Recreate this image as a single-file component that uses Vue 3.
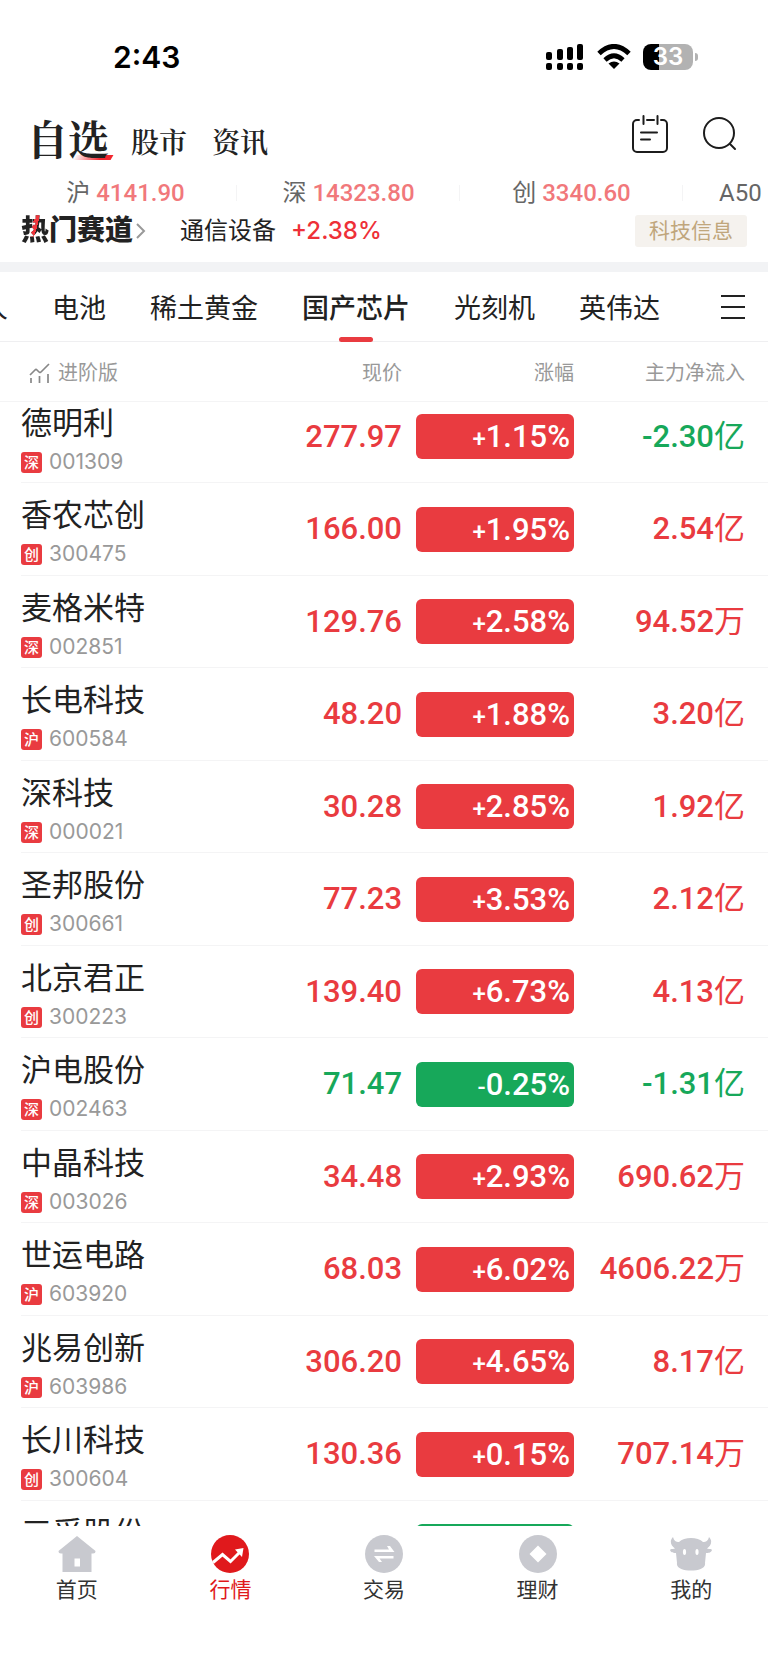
<template>
  <div class="app">
    <div class="status">
      <span class="time">2:43</span>
      <div class="status-icons">
        <svg width="38" height="28" viewBox="0 0 38 28" aria-hidden="true">
          <rect x="0" y="9" width="6" height="8" rx="2" />
          <rect x="11" y="6" width="6" height="11" rx="2" />
          <rect x="21" y="4" width="6" height="13" rx="2" />
          <rect x="31" y="1" width="6" height="16" rx="2" />
          <rect v-for="x in [0, 11, 21, 31]" :key="x" :x="x" y="20" width="6" height="7" rx="2" />
        </svg>
        <svg width="34" height="26" viewBox="0 0 34 26" aria-hidden="true">
          <path d="M2 9.500Q17-4.500 32 9.500" fill="none" stroke="#000" stroke-width="5" />
          <path d="M8 16Q17 7.500 26 16" fill="none" stroke="#000" stroke-width="4.600" />
          <path d="M11.500 19.500Q17 15.500 22.500 19.500L17 25Z" />
        </svg>
        <div class="battery"><span class="battery-level">33</span></div>
      </div>
    </div>

    <header class="topbar">
      <nav class="main-nav" aria-label="主导航">
        <a href="#" class="main-link active">自选</a>
        <a href="#" class="main-link">股市</a>
        <a href="#" class="main-link">资讯</a>
      </nav>
      <div class="tools">
        <button class="icon-btn" aria-label="日历">
          <svg width="37" height="38" viewBox="0 0 37 38" fill="none" stroke="#1c1c1c" stroke-width="2" stroke-linecap="round">
            <path d="M7 5H5a4 4 0 0 0-4 4v24a4 4 0 0 0 4 4h26a4 4 0 0 0 4-4V9a4 4 0 0 0-4-4h-2M15 5h7M11.500 1v8M25.500 1v8M9 17.500h16M9 24.500h9" />
          </svg>
        </button>
        <button class="icon-btn" aria-label="搜索">
          <svg width="34" height="34" viewBox="0 0 34 34" fill="none" stroke="#1c1c1c" stroke-width="2" stroke-linecap="round">
            <circle cx="16" cy="16" r="15" />
            <path d="M27 27l5 5" />
          </svg>
        </button>
      </div>
    </header>

    <ul class="ticker">
      <li v-for="t in indices" :key="t.name">
        {{ t.name }} <b v-if="t.value">{{ t.value }}</b>
      </li>
    </ul>

    <section class="hot">
      <a href="#" class="hot-title">
        <span class="hot-first">热</span>门赛道
        <svg width="10" height="18" viewBox="0 0 10 18" fill="none" stroke="#999" stroke-width="2" aria-hidden="true"><path d="M1 2l7 7-7 7" /></svg>
      </a>
      <span class="hot-name">通信设备</span>
      <span class="hot-change">+2.38%</span>
      <a href="#" class="hot-tag">科技信息</a>
    </section>

    <div class="tabs-bar">
      <div class="tabs" role="tablist">
        <button v-for="tab in tabs" :key="tab" class="tab" role="tab" :class="{ active: tab === current }" :aria-selected="tab === current" @click="current = tab">{{ tab }}</button>
      </div>
      <button class="more" aria-label="更多">
        <svg width="24" height="26" viewBox="0 0 24 26" stroke="#222" stroke-width="2" aria-hidden="true"><path d="M0 2h24M0 13h24M0 24h24" /></svg>
      </button>
    </div>

    <main class="list">
      <table>
        <colgroup>
          <col />
          <col class="col-price" />
          <col class="col-change" />
          <col class="col-flow" />
        </colgroup>
        <thead>
          <tr>
            <th scope="col">
              <svg width="21" height="20" viewBox="0 0 21 20" fill="none" stroke="#888" stroke-width="1.700" aria-hidden="true">
                <path d="M1 12l5-5q1-1 2 0l2 2q1 1 2 0l8-8M2 15v5M10.500 13v7M19 11v9" />
              </svg>
              进阶版
            </th>
            <th scope="col">现价</th>
            <th scope="col">涨幅</th>
            <th scope="col">主力净流入</th>
          </tr>
        </thead>
        <tbody>
          <tr v-for="s in stocks" :key="s.code" :class="{ fall: s.change[0] === '-' }">
            <td class="stock">
              <div class="name">{{ s.name }}</div>
              <div class="code"><span class="market">{{ s.market }}</span>{{ s.code }}</div>
            </td>
            <td class="price">{{ s.price }}</td>
            <td class="change"><span class="pill"><i>{{ s.change[0] }}</i>{{ s.change.slice(1) }}</span></td>
            <td class="flow" :class="{ out: s.flow[0] === '-' }">{{ s.flow }}<span class="unit">{{ s.unit }}</span></td>
          </tr>
        </tbody>
      </table>
    </main>

    <nav class="bottom-nav" aria-label="底部导航">
      <a href="#" class="bottom-link">
        <svg width="38" height="38" viewBox="0 0 38 38" aria-hidden="true">
          <path d="M19 1L37.500 16q0 2.500-2.500 2.500h-1.500V37h-29V18.500H3q-2.500 0-2.500-2.500Z" />
          <rect x="16.500" y="23.500" width="5.500" height="8" fill="#fff" />
        </svg>
        首页
      </a>
      <a href="#" class="bottom-link active">
        <svg width="38" height="38" viewBox="0 0 38 38" aria-hidden="true">
          <circle cx="19" cy="19" r="19" />
          <path d="M2 27.500L11.500 19.500L19.500 26.500L29 17" fill="none" stroke="#fff" stroke-width="3" />
          <path d="M24 14.500L32.500 13L31 22Z" fill="#fff" />
        </svg>
        行情
      </a>
      <a href="#" class="bottom-link">
        <svg width="38" height="38" viewBox="0 0 38 38" aria-hidden="true">
          <circle cx="19" cy="19" r="19" />
          <path d="M9.500 17V14.500H24L22 11h3L29.500 17ZM28.500 21V23.500H14.500L17 27h-3L9 21Z" fill="#fff" />
        </svg>
        交易
      </a>
      <a href="#" class="bottom-link">
        <svg width="38" height="38" viewBox="0 0 38 38" aria-hidden="true">
          <circle cx="19" cy="19" r="19" />
          <path d="M19 10.500L27.500 19L19 27.500L10.500 19Z" fill="#fff" />
        </svg>
        理财
      </a>
      <a href="#" class="bottom-link">
        <svg width="42" height="38" viewBox="0 0 42 38" aria-hidden="true">
          <path d="M3 2C4 6 6 7 9 7C14 1.500 28 1.500 33 7C36 7 38 6 39 2C43 6 41 11 37 13.500C39 14.500 41 13 42 15C41 18 38 18 36 18L35 28C37 38 5 38 7 28L6 18C4 18 1 18 0 15C1 13 3 14.500 5 13.500C1 11-1 6 3 2Z" />
          <ellipse cx="14.500" cy="17" rx="1.600" ry="3" fill="#fff" />
          <ellipse cx="27" cy="17" rx="1.600" ry="3" fill="#fff" />
        </svg>
        我的
      </a>
    </nav>
  </div>
</template>

<script setup>
import { ref } from 'vue'

const current = ref('国产芯片')
const tabs = ['机器人', '电池', '稀土黄金', '国产芯片', '光刻机', '英伟达']

const indices = [
  { name: '沪', value: '4141.90' },
  { name: '深', value: '14323.80' },
  { name: '创', value: '3340.60' },
  { name: 'A50' }
]

const stocks = [
  { name: '德明利', market: '深', code: '001309', price: '277.97', change: '+1.15%', flow: '-2.30', unit: '亿' },
  { name: '香农芯创', market: '创', code: '300475', price: '166.00', change: '+1.95%', flow: '2.54', unit: '亿' },
  { name: '麦格米特', market: '深', code: '002851', price: '129.76', change: '+2.58%', flow: '94.52', unit: '万' },
  { name: '长电科技', market: '沪', code: '600584', price: '48.20', change: '+1.88%', flow: '3.20', unit: '亿' },
  { name: '深科技', market: '深', code: '000021', price: '30.28', change: '+2.85%', flow: '1.92', unit: '亿' },
  { name: '圣邦股份', market: '创', code: '300661', price: '77.23', change: '+3.53%', flow: '2.12', unit: '亿' },
  { name: '北京君正', market: '创', code: '300223', price: '139.40', change: '+6.73%', flow: '4.13', unit: '亿' },
  { name: '沪电股份', market: '深', code: '002463', price: '71.47', change: '-0.25%', flow: '-1.31', unit: '亿' },
  { name: '中晶科技', market: '深', code: '003026', price: '34.48', change: '+2.93%', flow: '690.62', unit: '万' },
  { name: '世运电路', market: '沪', code: '603920', price: '68.03', change: '+6.02%', flow: '4606.22', unit: '万' },
  { name: '兆易创新', market: '沪', code: '603986', price: '306.20', change: '+4.65%', flow: '8.17', unit: '亿' },
  { name: '长川科技', market: '创', code: '300604', price: '130.36', change: '+0.15%', flow: '707.14', unit: '万' },
  { name: '三孚股份', market: '沪', code: '603938', price: '', change: '-', flow: '', unit: '' }
]
</script>

<style>
body { background: #fff; }
</style>

<style scoped>
* { box-sizing: border-box; }
.app { --red: #e93b40; --green: #17a85a; --line: #f4f4f5; height: 100vh; display: flex; flex-direction: column; overflow: hidden; background: #fff; color: #222; font-family: Roboto, 'Noto Sans CJK SC', sans-serif; }
.app > * { flex-shrink: 0; }
a { color: inherit; text-decoration: none; }
button { background: none; border: none; padding: 0; font: inherit; color: inherit; cursor: pointer; }
svg { display: block; flex-shrink: 0; }

.status { height: 114px; padding: 0 70px 0 113px; display: flex; align-items: center; justify-content: space-between; }
.time { font: 600 30px/38px Inter, sans-serif; color: #000; }
.status-icons { display: flex; align-items: center; gap: 13px; }
.battery { display: flex; align-items: center; }
.battery-level { width: 50px; height: 26px; margin-left: -1px; border-radius: 8px; background: linear-gradient(90deg, #000 16px, #b2b2b2 16px); color: #fff; font: 600 24px/26px Inter, sans-serif; text-align: center; }
.battery::after { content: ''; width: 3px; height: 8px; margin-left: 2px; border-radius: 0 4px 4px 0; background: #b2b2b2; }

.topbar { height: 61px; padding: 0 31px 0 27px; display: flex; justify-content: space-between; }
.main-nav { display: flex; align-items: center; gap: 25px; padding-bottom: 8px; font-family: 'Noto Serif CJK SC', 'Noto Sans CJK SC', serif; }
.main-link { font-size: 28px; line-height: 40px; font-weight: 600; }
.main-link.active { font-size: 41px; line-height: 48px; font-weight: 700; margin-right: -3px; padding-bottom: 6px; position: relative; z-index: 0; }
.main-link.active::after { content: ''; position: absolute; z-index: -1; right: -3px; bottom: 8px; width: 38px; height: 5px; background: linear-gradient(90deg, #fff, #f3272f 70%); transform: skewX(-30deg); }
.tools { display: flex; align-items: center; gap: 34px; padding-bottom: 21px; }
.icon-btn { display: block; }

.ticker { list-style: none; margin: 0 0 0 14px; padding: 0; height: 35px; display: flex; align-items: center; overflow: hidden; line-height: 36px; color: #666; white-space: nowrap; }
.ticker li { flex: 0 0 223px; text-align: center; background: linear-gradient(var(--line), var(--line)) 100% 50% / 1px 16px no-repeat; font-size: 24px; }
.ticker li:last-child { text-align: left; padding-left: 36px; }
.ticker b { font-weight: 500; color: #f1787b; font-size: 24px; }

.hot { height: 52px; padding: 0 21px 10px; display: flex; align-items: center; line-height: 36px; }
.hot-title { display: flex; align-items: center; font-size: 28px; font-weight: 900; margin-right: 34px; }
.hot-title svg { margin-left: 3px; }
.hot-first { background: linear-gradient(105deg, transparent 42%, #f0353b 42%, #f0353b 57%, transparent 57%) 0 0 / 100% 68% no-repeat, #222; background-clip: text; -webkit-background-clip: text; color: transparent; }
.hot-name { font-size: 24px; margin-right: 15px; }
.hot-change { font: 500 24px/38px Inter, sans-serif; color: #ee3038; }
.hot-tag { margin-left: auto; padding: 0 14px; border-radius: 3px; background: #f5f2ee; color: #c0a67c; font-size: 21px; line-height: 32px; }

.tabs-bar { height: 80px; border-top: 10px solid #f2f3f5; border-bottom: 1px solid #efeff1; display: flex; align-items: stretch; justify-content: space-between; padding-right: 23px; }
.tabs { display: flex; gap: 44px; margin-left: -73px; }
.tab { position: relative; font-size: 27px; line-height: 40px; white-space: nowrap; padding-top: 4px; }
.tab.active { font-weight: 500; }
.tab.active::after { content: ''; position: absolute; left: 50%; bottom: -1px; width: 34px; height: 5px; margin-left: -17px; border-radius: 3px; background: var(--red); }

.app > .list { flex: 1 1 0; min-height: 0; overflow: hidden; }
table { width: 100%; table-layout: fixed; border-collapse: separate; border-spacing: 0; }
.col-price { width: 140px; }
.col-change { width: 172px; }
.col-flow { width: 194px; }
th { height: 60px; padding: 2px 0 0; border-bottom: 1px solid var(--line); color: #999; font-size: 20px; line-height: 30px; font-weight: 400; text-align: right; }
th:first-child { display: flex; align-items: center; gap: 8px; padding-left: 29px; }
th:last-child, .flow { padding-right: 23px; }
td { height: 92px; padding: 0; border-bottom: 1px solid var(--line); text-align: right; font-size: 31px; line-height: 40px; font-weight: 500; color: var(--red); white-space: nowrap; }
tr:nth-child(even) td { height: 93px; }
.stock { padding: 16px 0 0 21px; border-bottom: none; background: linear-gradient(var(--line), var(--line)) 21px 100% / 100% 1px no-repeat; text-align: left; vertical-align: top; font-weight: 400; }
/* the first row is partly scrolled under the column headings */
tbody tr:first-child td { height: 81px; padding-bottom: 11px; }
tbody tr:first-child .stock { padding-top: 5px; padding-bottom: 0; }
.name { color: #222; font-size: 31px; line-height: 34px; }
.code { display: flex; align-items: center; gap: 7px; margin-top: 8px; color: #999; font: 400 21px/26px Inter, sans-serif; }
.market { width: 21px; height: 21px; border-radius: 3px; background: var(--red); color: #fff; font: 500 15px/20px 'Noto Sans CJK SC', sans-serif; text-align: center; }
.pill { display: block; height: 45px; margin-left: 14px; padding-right: 4px; border-radius: 6px; background: var(--red); color: #fff; line-height: 46px; }
.pill i { font-size: 24px; font-style: normal; }
.unit { font-weight: 400; }
.fall .price, .out { color: var(--green); }
.fall .pill { background: var(--green); }

.bottom-nav { height: 143px; padding-top: 9px; display: flex; background: #fff; }
.bottom-link { flex: 1; display: flex; flex-direction: column; align-items: center; color: #333; font-size: 21px; line-height: 34px; }
.bottom-link svg { fill: #c8c9cf; }
.bottom-link.active { color: #e0191c; }
.bottom-link.active svg { fill: #e0191c; }
</style>
